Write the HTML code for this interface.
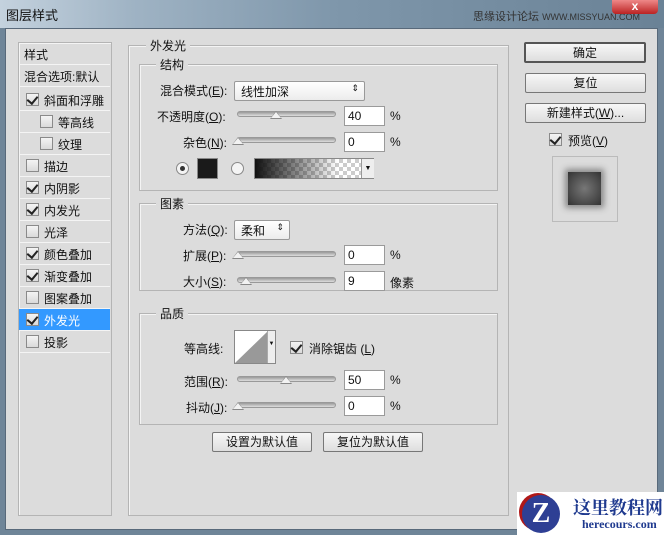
<!DOCTYPE html>
<html><head><meta charset="utf-8"><style>
*{box-sizing:border-box;margin:0;padding:0}
body{width:664px;height:535px;overflow:hidden;background:#6f8598;font-family:"Liberation Sans","Noto Sans CJK SC",sans-serif;font-size:12px;color:#111;position:relative}
.a{position:absolute}
#title{left:0;top:0;width:664px;height:28px;background:linear-gradient(90deg,#c4d2de 0%,#9fb3c4 20%,#7f97ab 50%,#6a8296 100%)}
#dlg{left:5px;top:28px;width:653px;height:502px;background:#dcdcdc;border:1px solid #58697a}
.grp{border:1px solid #b4b4b4;box-shadow:1px 1px 0 #f4f4f4 inset}
.lbl{background:#dcdcdc;padding:0 4px}
.cb{width:13px;height:13px;border:1px solid #8a8a8a;background:linear-gradient(#f4f4f4,#dadada)}
.cb.on::after{content:"";position:absolute;left:2px;top:0px;width:5px;height:8px;border:solid #222;border-width:0 2px 2px 0;transform:rotate(40deg)}
.row{left:19px;width:91px;height:22px;border-bottom:1px solid #f4f4f4}
.row span{position:absolute;top:3px}
.inp{width:41px;height:20px;background:#fff;border:1px solid #9a9a9a;padding:2px 3px}
.trk{height:6px;background:linear-gradient(#999,#ddd);border:1px solid #999;border-radius:3px}
.th{width:0;height:0;border-left:6px solid transparent;border-right:6px solid transparent;border-bottom:8px solid #888}
.th::after{content:"";position:absolute;left:-5px;top:1px;border-left:5px solid transparent;border-right:5px solid transparent;border-bottom:6px solid #f2f2f2}
.btn{border:1px solid #777;border-radius:2px;background:linear-gradient(#f7f7f7,#dedede);text-align:center;line-height:18px;font-size:12px}
.sel{height:20px;border:1px solid #999;border-radius:2px;background:linear-gradient(#fff,#ececec);padding:1px 6px}
</style></head><body>
<div id="title" class="a"></div>
<div class="a" style="left:6px;top:5px;font-size:13px">图层样式</div>
<div class="a" style="left:473px;top:8px;font-size:11px;color:#333">思缘设计论坛 <span style="font-size:9px">WWW.MISSYUAN.COM</span></div>
<div class="a" style="left:612px;top:0;width:46px;height:14px;background:linear-gradient(#e88,#b22);border-radius:0 0 4px 4px;color:#fff;text-align:center;font-weight:bold;line-height:12px">x</div>
<div id="dlg" class="a"></div>

<!-- left list -->
<div class="a grp" style="left:18px;top:42px;width:94px;height:474px;background:#dcdcdc"></div>
<div class="a row" style="top:43px"><span style="left:5px">样式</span></div>
<div class="a row" style="top:65px"><span style="left:5px">混合选项:默认</span></div>
<div class="a row" style="top:89px"><i class="a cb on" style="left:7px;top:4px"></i><span style="left:25px">斜面和浮雕</span></div>
<div class="a row" style="top:111px"><i class="a cb" style="left:21px;top:4px"></i><span style="left:39px">等高线</span></div>
<div class="a row" style="top:133px"><i class="a cb" style="left:21px;top:4px"></i><span style="left:39px">纹理</span></div>
<div class="a row" style="top:155px"><i class="a cb" style="left:7px;top:4px"></i><span style="left:25px">描边</span></div>
<div class="a row" style="top:177px"><i class="a cb on" style="left:7px;top:4px"></i><span style="left:25px">内阴影</span></div>
<div class="a row" style="top:199px"><i class="a cb on" style="left:7px;top:4px"></i><span style="left:25px">内发光</span></div>
<div class="a row" style="top:221px"><i class="a cb" style="left:7px;top:4px"></i><span style="left:25px">光泽</span></div>
<div class="a row" style="top:243px"><i class="a cb on" style="left:7px;top:4px"></i><span style="left:25px">颜色叠加</span></div>
<div class="a row" style="top:265px"><i class="a cb on" style="left:7px;top:4px"></i><span style="left:25px">渐变叠加</span></div>
<div class="a row" style="top:287px"><i class="a cb" style="left:7px;top:4px"></i><span style="left:25px">图案叠加</span></div>
<div class="a row" style="top:309px;background:#3399ff;color:#fff"><i class="a cb on" style="left:7px;top:4px"></i><span style="left:25px">外发光</span></div>
<div class="a row" style="top:331px"><i class="a cb" style="left:7px;top:4px"></i><span style="left:25px">投影</span></div>

<!-- outer group -->
<div class="a grp" style="left:128px;top:45px;width:381px;height:471px"></div>
<div class="a lbl" style="left:146px;top:37px">外发光</div>

<div class="a grp" style="left:139px;top:64px;width:359px;height:127px"></div>
<div class="a lbl" style="left:156px;top:56px">结构</div>
<div class="a" style="left:160px;top:82px">混合模式(<u>E</u>):</div>
<div class="a sel" style="left:234px;top:81px;width:131px">线性加深<span class="a" style="right:5px;top:1px;font-size:9px">⇕</span></div>
<div class="a" style="left:157px;top:108px">不透明度(<u>O</u>):</div>
<div class="a trk" style="left:237px;top:111px;width:99px"></div>
<div class="a th" style="left:270px;top:111px"></div>
<div class="a inp" style="left:344px;top:106px">40</div>
<div class="a" style="left:390px;top:109px">%</div>
<div class="a" style="left:183px;top:134px">杂色(<u>N</u>):</div>
<div class="a trk" style="left:237px;top:137px;width:99px"></div>
<div class="a th" style="left:232px;top:137px"></div>
<div class="a inp" style="left:344px;top:132px">0</div>
<div class="a" style="left:390px;top:135px">%</div>
<div class="a" style="left:176px;top:162px;width:13px;height:13px;border-radius:50%;border:1px solid #888;background:#f4f4f4"><i class="a" style="left:3px;top:3px;width:5px;height:5px;border-radius:50%;background:#333"></i></div>
<div class="a" style="left:197px;top:158px;width:21px;height:21px;background:#1a1a1a;border:1px solid #888"></div>
<div class="a" style="left:231px;top:162px;width:13px;height:13px;border-radius:50%;border:1px solid #888;background:#f4f4f4"></div>
<div class="a" style="left:254px;top:158px;width:120px;height:21px;border:1px solid #888;background:linear-gradient(90deg,#111,rgba(0,0,0,0) 70%),repeating-conic-gradient(#ccc 0 25%,#fff 0 50%) 0 0/8px 8px"></div>
<div class="a" style="left:361px;top:159px;width:13px;height:19px;background:#eee;border-left:1px solid #999;font-size:7px;text-align:center;line-height:19px">▼</div>

<div class="a grp" style="left:139px;top:203px;width:359px;height:88px"></div>
<div class="a lbl" style="left:156px;top:195px">图素</div>
<div class="a" style="left:183px;top:221px">方法(<u>Q</u>):</div>
<div class="a sel" style="left:234px;top:220px;width:56px">柔和<span class="a" style="right:5px;top:1px;font-size:9px">⇕</span></div>
<div class="a" style="left:183px;top:247px">扩展(<u>P</u>):</div>
<div class="a trk" style="left:237px;top:251px;width:99px"></div>
<div class="a th" style="left:232px;top:251px"></div>
<div class="a inp" style="left:344px;top:245px">0</div>
<div class="a" style="left:390px;top:248px">%</div>
<div class="a" style="left:183px;top:273px">大小(<u>S</u>):</div>
<div class="a trk" style="left:237px;top:277px;width:99px"></div>
<div class="a th" style="left:240px;top:277px"></div>
<div class="a inp" style="left:344px;top:271px">9</div>
<div class="a" style="left:390px;top:274px">像素</div>

<div class="a grp" style="left:139px;top:313px;width:359px;height:112px"></div>
<div class="a lbl" style="left:156px;top:305px">品质</div>
<div class="a" style="left:184px;top:340px">等高线:</div>
<div class="a" style="left:234px;top:330px;width:42px;height:34px;border:1px solid #888;background:#fff;overflow:hidden"><svg width="33" height="32" class="a" style="left:0;top:0"><polygon points="0,32 33,0 33,32" fill="#999"/></svg><i class="a" style="right:0;top:0;width:8px;height:32px;background:#eee;border-left:1px solid #aaa;font-size:6px;font-style:normal;line-height:26px;text-align:center">▼</i></div>
<div class="a cb on" style="left:290px;top:341px"></div>
<div class="a" style="left:309px;top:340px">消除锯齿 (<u>L</u>)</div>
<div class="a" style="left:184px;top:373px">范围(<u>R</u>):</div>
<div class="a trk" style="left:237px;top:376px;width:99px"></div>
<div class="a th" style="left:280px;top:376px"></div>
<div class="a inp" style="left:344px;top:370px">50</div>
<div class="a" style="left:390px;top:373px">%</div>
<div class="a" style="left:186px;top:399px">抖动(<u>J</u>):</div>
<div class="a trk" style="left:237px;top:402px;width:99px"></div>
<div class="a th" style="left:232px;top:402px"></div>
<div class="a inp" style="left:344px;top:396px">0</div>
<div class="a" style="left:390px;top:399px">%</div>

<div class="a btn" style="left:212px;top:432px;width:100px;height:20px">设置为默认值</div>
<div class="a btn" style="left:323px;top:432px;width:100px;height:20px">复位为默认值</div>

<!-- right -->
<div class="a btn" style="left:524px;top:42px;width:122px;height:21px;border:2px solid #555">确定</div>
<div class="a btn" style="left:525px;top:73px;width:121px;height:20px">复位</div>
<div class="a btn" style="left:525px;top:103px;width:121px;height:20px">新建样式(<u>W</u>)...</div>
<div class="a cb on" style="left:549px;top:133px"></div>
<div class="a" style="left:568px;top:132px">预览(<u>V</u>)</div>
<div class="a" style="left:552px;top:156px;width:66px;height:66px;border:1px solid #bbb;background:#dcdcdc"><div class="a" style="left:15px;top:15px;width:33px;height:33px;background:radial-gradient(#777,#333);box-shadow:0 0 6px 3px #888"></div></div>

<!-- watermark -->
<div class="a" style="left:517px;top:492px;width:147px;height:43px;background:#fff"></div>
<div class="a" style="left:522px;top:495px;width:38px;height:38px;border-radius:50%;background:#2e3f94;color:#fff;font:bold 28px/38px 'Liberation Serif',serif;text-align:center;box-shadow:-3px -2px 0 #b01818">Z</div>
<div class="a" style="left:573px;top:494px;color:#1f3a8f;font:bold 18px 'Noto Serif CJK SC',serif">这里教程网</div>
<div class="a" style="left:582px;top:517px;color:#1f3a8f;font:bold 12px 'Liberation Serif',serif">herecours.com</div>
</body></html>
